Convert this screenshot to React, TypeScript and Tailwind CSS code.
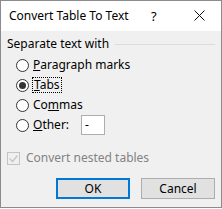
import React from "react";

const font = { fontFamily: '"Noto Sans", "Liberation Sans", sans-serif' };

function Radio({ checked }: { checked?: boolean }) {
  return (
    <span className="w-[13px] h-[13px] rounded-full border border-[#333333] bg-white flex items-center justify-center shrink-0">
      {checked && <span className="w-[7px] h-[7px] rounded-full bg-[#333333]" />}
    </span>
  );
}

export default function App() {
  return (
    <div
      className="w-[222px] h-[208px] border border-[#8c8c8c] bg-[#f0f0f0] flex flex-col text-[12px] text-black"
      style={font}
    >
      <div className="h-[30px] bg-white flex items-center pl-[8px] relative">
        <span>Convert Table To Text</span>
        <span className="absolute left-[150px] top-[6px] text-[13px]">?</span>
        <svg className="absolute left-[193px] top-[9px]" width="11" height="11" viewBox="0 0 11 11">
          <path d="M0.5 0.5 L10.5 10.5 M10.5 0.5 L0.5 10.5" stroke="#111" strokeWidth="1" />
        </svg>
      </div>

      <div className="flex items-center h-[16px] mt-[5px] pl-[6px] pr-[6px] gap-[6px]">
        <span className="whitespace-nowrap">Separate text with</span>
        <span className="flex-1 h-px bg-[#dcdcdc]" />
      </div>

      <div className="flex flex-col mt-[3px] pl-[15px]">
        <div className="h-[20px] flex items-center gap-[4px]">
          <Radio />
          <span><u>P</u>aragraph marks</span>
        </div>
        <div className="h-[20px] flex items-center gap-[3px]">
          <Radio checked />
          <span className="border border-dotted border-black px-px leading-[14px]"><u>T</u>abs</span>
        </div>
        <div className="h-[20px] flex items-center gap-[4px]">
          <Radio />
          <span>Co<u>m</u>mas</span>
        </div>
        <div className="h-[20px] flex items-center gap-[4px]">
          <Radio />
          <span className="w-[44px]"><u>O</u>ther:</span>
          <span className="w-[24px] h-[20px] border border-[#adadad] bg-white flex items-center pl-[3px]">-</span>
        </div>
      </div>

      <div className="flex items-center h-[16px] mt-[15px] pl-[6px] gap-[6px] text-[#838383]">
        <span className="w-[13px] h-[13px] border border-[#c4c4c4] flex items-center justify-center">
          <svg width="11" height="11" viewBox="0 0 11 11">
            <path d="M1.5 5.5 L4.5 8.5 L9.5 2.5" stroke="#c4c4c4" strokeWidth="1.2" fill="none" />
          </svg>
        </span>
        <span>Convert nested tables</span>
      </div>

      <div className="flex mt-[12px] pl-[55px] gap-[11px]">
        <button className="w-[74px] h-[21px] border-2 border-[#0078d7] bg-[#e1e1e1] flex items-center justify-center">
          OK
        </button>
        <button className="w-[74px] h-[21px] border border-[#adadad] bg-[#e1e1e1] flex items-center justify-center">
          Cancel
        </button>
      </div>
    </div>
  );
}
